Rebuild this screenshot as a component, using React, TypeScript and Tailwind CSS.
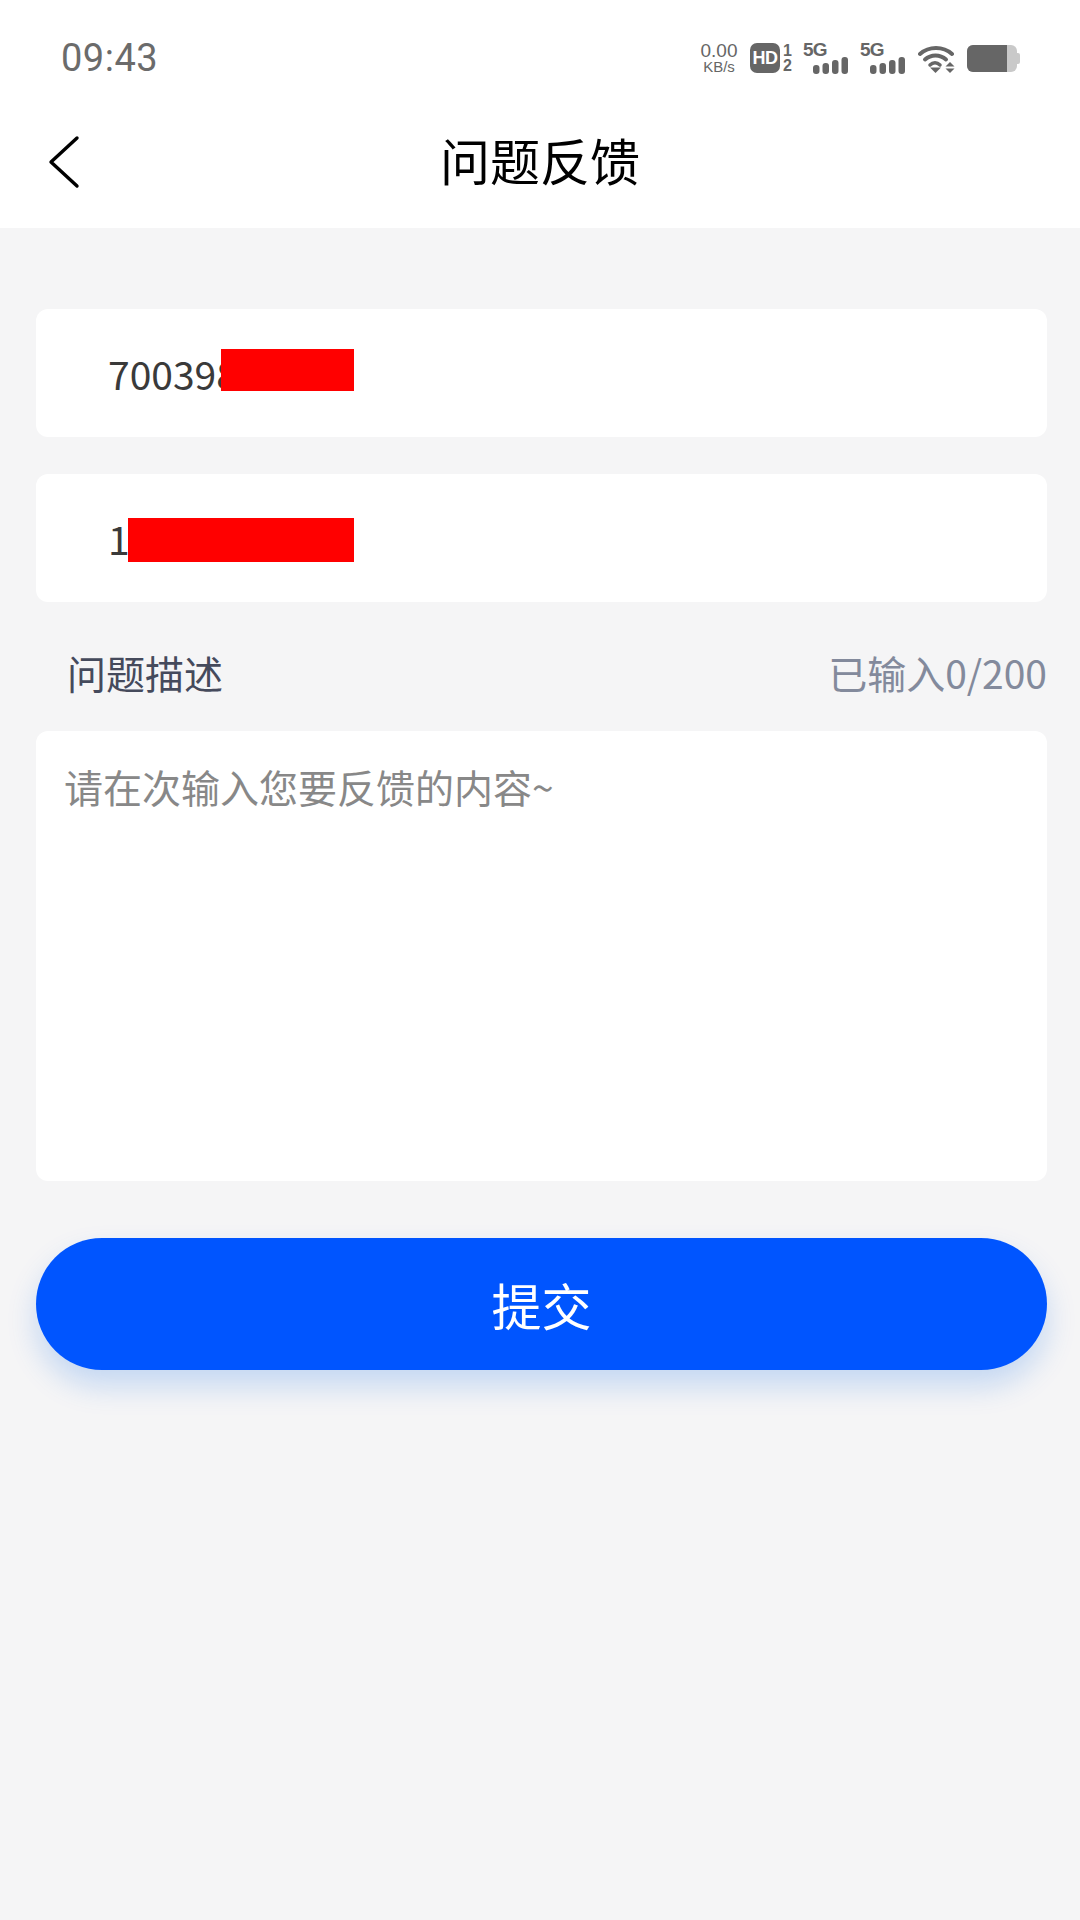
import React from "react";

const cjk = { fontFamily: '"Noto Sans CJK SC", "Noto Sans", sans-serif' };

function SimBars() {
  return (
    <svg width="35" height="17" viewBox="0 0 35 17" fill="#666">
      <rect x="0" y="8" width="6.5" height="9" rx="3" />
      <rect x="9.5" y="6" width="6.5" height="11" rx="3" />
      <rect x="19" y="3" width="6.5" height="14" rx="3" />
      <rect x="28.5" y="0" width="6.5" height="17" rx="3" />
    </svg>
  );
}

function Sim() {
  return (
    <div className="flex h-[30px] w-[45px] flex-col">
      <span className="h-[14px] text-[19px] leading-[14px] font-bold tracking-[-0.8px] text-[#666] [font-family:'Liberation_Sans',sans-serif]">
        5G
      </span>
      <div className="ml-[10px] flex">
        <SimBars />
      </div>
    </div>
  );
}

function Wifi() {
  return (
    <svg width="37" height="29" viewBox="0 0 37 29" fill="none">
      <path d="M2 10 C11 2 25 2 34 10" stroke="#666" strokeWidth="4" strokeLinecap="round" />
      <path d="M7 15.5 C13 10 22 10 28 15.5" stroke="#666" strokeWidth="4" strokeLinecap="round" />
      <path d="M12 21 C15 18 19 18 22 21" stroke="#666" strokeWidth="3.5" strokeLinecap="round" />
      <path d="M12 23.5 H23 L17.5 29 Z" fill="#666" />
      <path d="M32 18 L36.5 22.5 H27.5 Z" fill="#666" />
      <path d="M27.5 24.5 H36.5 L32 29 Z" fill="#666" />
    </svg>
  );
}

function Battery() {
  return (
    <svg width="53" height="27" viewBox="0 0 53 27">
      <rect x="0" y="0" width="50" height="27" rx="6" fill="#c9c9c9" />
      <path d="M6 0 H40 V27 H6 A6 6 0 0 1 0 21 V6 A6 6 0 0 1 6 0 Z" fill="#666" />
      <path d="M50 8 H51 A2 2 0 0 1 53 10 V17 A2 2 0 0 1 51 19 H50 Z" fill="#c9c9c9" />
    </svg>
  );
}

function StatusBar() {
  return (
    <div className="flex h-[116px] items-center justify-between pl-[61px] pr-[60px]">
      <span className="text-[38px] leading-none tracking-[0.5px] text-[#6b6b6b] [font-family:Roboto,sans-serif]">
        09:43
      </span>
      <div className="flex items-center">
        <div className="flex w-[40px] flex-col items-center text-[#666] [font-family:'Liberation_Sans',sans-serif]">
          <span className="text-[19px] leading-[18px]">0.00</span>
          <span className="text-[15px] leading-[14px]">KB/s</span>
        </div>
        <div className="ml-[11px] flex h-[30px] w-[30px] items-center justify-center rounded-[7px] bg-[#666]">
          <span className="text-[18px] leading-none font-bold tracking-[-0.5px] text-white [font-family:'Liberation_Sans',sans-serif]">
            HD
          </span>
        </div>
        <div className="ml-[2px] flex w-[11px] flex-col items-center text-[16px] leading-[15px] font-bold text-[#666] [font-family:'Liberation_Sans',sans-serif]">
          <span>1</span>
          <span>2</span>
        </div>
        <div className="ml-[10px]">
          <Sim />
        </div>
        <div className="ml-[12px]">
          <Sim />
        </div>
        <div className="ml-[13px]">
          <Wifi />
        </div>
        <div className="ml-[12px]">
          <Battery />
        </div>
      </div>
    </div>
  );
}

function NavBar() {
  return (
    <div className="relative flex h-[112px] items-center justify-center bg-white pb-[27px]">
      <svg
        className="absolute left-[48px] top-[19px]"
        width="32"
        height="54"
        viewBox="0 0 32 54"
        fill="none"
      >
        <path d="M29 3 L3 27 L29 51" stroke="#000" strokeWidth="3.4" strokeLinecap="round" strokeLinejoin="round" />
      </svg>
      <span className="text-[50px] leading-none text-black">问题反馈</span>
    </div>
  );
}

function InfoCard({ value, redact }: { value: string; redact: string }) {
  return (
    <div className="flex h-[128px] items-center rounded-[12px] bg-white pl-[72px]">
      <div className="relative flex h-[44px] w-[246px] items-center">
        <span className="text-[39px] leading-none text-[#3a3a3a]">{value}</span>
        <div className={redact} />
      </div>
    </div>
  );
}

export default function App() {
  return (
    <div className="min-h-screen bg-[#f5f5f6]" style={cjk}>
      <div className="bg-white">
        <StatusBar />
        <NavBar />
      </div>

      <div className="flex flex-col pl-[36px] pr-[33px] pt-[81px]">
        <InfoCard value="700398" redact="absolute left-[113px] top-[-2px] h-[42px] w-[133px] bg-[#ff0000]" />
        <div className="mt-[37px]">
          <InfoCard value="1" redact="absolute left-[20px] top-[2px] h-[44px] w-[226px] bg-[#ff0000]" />
        </div>

        <div className="flex h-[129px] items-center justify-between pl-[31px] pt-[11px]">
          <span className="text-[39px] leading-none text-[#454a5c]">问题描述</span>
          <span className="text-[39px] leading-none text-[#838a9c]">已输入0/200</span>
        </div>

        <div className="h-[450px] rounded-[12px] bg-white pl-[28px] pt-[26px]">
          <span className="text-[39px] leading-[58px] text-[#888888]">请在次输入您要反馈的内容~</span>
        </div>

        <button className="mt-[57px] flex h-[132px] items-center justify-center rounded-full bg-[#0055ff] shadow-[0_16px_30px_rgba(0,100,230,0.2)]">
          <span className="text-[50px] leading-none text-white">提交</span>
        </button>
      </div>
    </div>
  );
}
